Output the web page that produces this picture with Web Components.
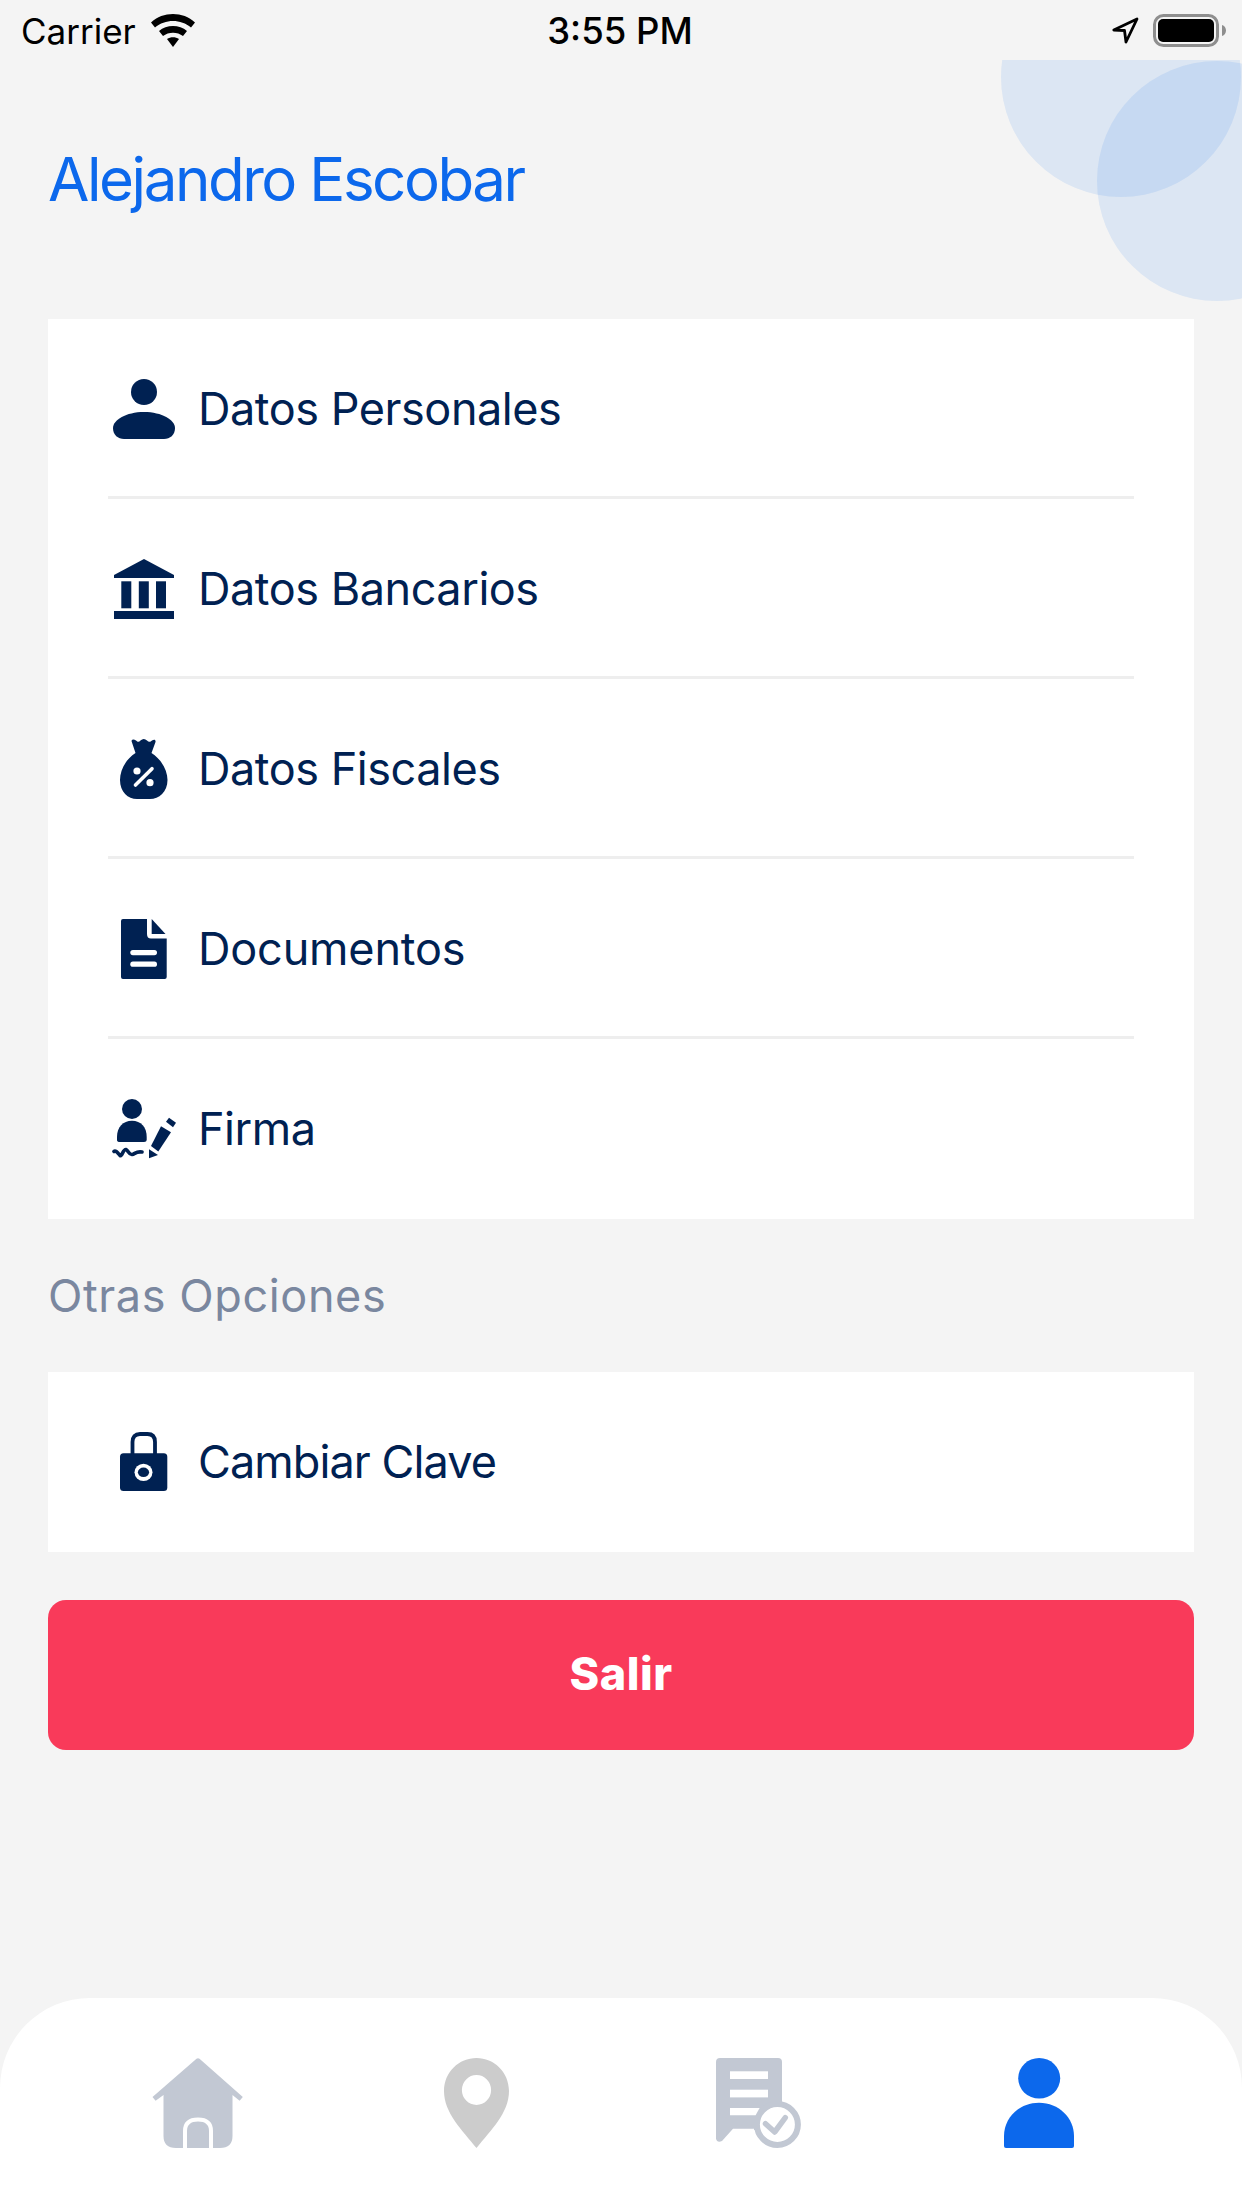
<!DOCTYPE html>
<html lang="es">
<head>
<meta charset="utf-8">
<title>Perfil</title>
<style>
  html, body { margin: 0; padding: 0; }
  body { background: #f4f4f4; font-family: Inter, "Liberation Sans", sans-serif; }
  app-screen { height: 2208px; }
</style>
</head>
<body>
<app-screen>
  <status-bar></status-bar>
  <profile-header name="Alejandro Escobar"></profile-header>
  <menu-card>
    <menu-row label="Datos Personales" icon="person"></menu-row>
    <menu-row label="Datos Bancarios" icon="bank"></menu-row>
    <menu-row label="Datos Fiscales" icon="bag"></menu-row>
    <menu-row label="Documentos" icon="doc" spacing="-.17px"></menu-row>
    <menu-row label="Firma" icon="sign" last></menu-row>
  </menu-card>
  <section-label>Otras Opciones</section-label>
  <menu-card>
    <menu-row label="Cambiar Clave" icon="lock" spacing="-.92px" last></menu-row>
  </menu-card>
  <logout-button>Salir</logout-button>
  <tab-bar></tab-bar>
</app-screen>

<script>
// iconos de las filas, caja de 64x60
const ROW_ICONS = {
  person: `<circle cx="32" cy="13" r="13"/><path d="M32 33C50 33 63 41 63 49C63 56 58 60 52 60H12C6 60 1 56 1 49C1 41 14 33 32 33Z"/>`,
  bank: `<path d="M32 0L62 16V19H2V16Z"/><rect x="9.3" y="22.3" width="10" height="27"/><rect x="26.8" y="22.3" width="10" height="27"/><rect x="44" y="22.3" width="10" height="27"/><rect x="2" y="52" width="60" height="8"/>`,
  bag: `<path d="M19.5 2C20 0 22 0 24 1.5C26 3.5 27 3 28.5 1.5C30.5 -.5 33 -.5 35 1.5C36.5 3 38 3.5 40 1.5C42 0 44 .5 43.5 3L39.5 14C49 20 55.5 31 55.5 41C55.5 53 47 60 38 60H25C16 60 8 53 8 41C8 31 14 20 23.5 14Z"/><circle cx="25" cy="32" r="3.6" fill="#fff"/><circle cx="38" cy="43.7" r="3.6" fill="#fff"/><path d="M23.5 46L40 29.7" stroke="#fff" stroke-width="3.6" stroke-linecap="round"/>`,
  doc: `<path d="M11 0H35V15Q35 19.5 39 19.5H54.7V58Q54.7 60 52.7 60H11Q9 60 9 58V2Q9 0 11 0Z"/><path d="M39.7 0L53.5 15H39.7Z"/><rect x="18.3" y="31" width="26.7" height="5.2" rx="2.6" fill="#fff"/><rect x="18.3" y="42.6" width="26.7" height="5.2" rx="2.6" fill="#fff"/>`,
  sign: `<circle cx="20" cy="10" r="10"/><path d="M5 38C5 28 11 21.7 20 21.7C29 21.7 34.7 28 34.7 38V41Q34.7 43 32 43H8Q5 43 5 41Z"/><path d="M2 52.5C4 51 6 54 8 56.5C10 58 11 50 14 50.5C16 51 17 56 20 55.5C23 55 24 52 30 53" fill="none" stroke="#002152" stroke-width="3.6" stroke-linecap="round"/><path d="M49 27.3L59 33.3L46.3 52.5L39 47Z"/><path d="M54 22.7L57 18.7L64 23.7L61 28.3Z"/><path d="M37 50.3L46 56L37 59.3Z"/>`,
  lock: `<path d="M20.5 22V10Q20.5 2 28 2H35.5Q43 2 43 10V22" fill="none" stroke="#002152" stroke-width="3.8"/><rect x="8" y="21.3" width="47.3" height="37.7" rx="3.5"/><ellipse cx="31.5" cy="40.3" rx="9" ry="8.6" fill="#fff"/><ellipse cx="31.5" cy="40.3" rx="5.6" ry="4.8"/>`
};

const statusTpl = document.createElement("template");
statusTpl.innerHTML = `
  <style>
    :host { display: flex; align-items: center; height: 60px; padding: 0 21px; box-sizing: border-box; color: #000; font: 400 35px Inter, "Liberation Sans", sans-serif; }
    .side { flex: 1; display: flex; align-items: center; }
    .left { gap: 15px; }
    .left span, .time { padding-top: 2px; }
    .right { justify-content: flex-end; gap: 14px; margin-right: -5px; }
    .time { font-weight: 500; font-size: 36.5px; margin-right: 7px; }
    svg { display: block; }
  </style>
  <div class="side left">
    <span>Carrier</span>
    <svg width="44" height="33" viewBox="0 0 44 33">
      <path d="M0 8.5C12 -2.8 32 -2.8 44 8.5L40 13.5C30 4.8 14 4.8 4 13.5Z"/>
      <path d="M8 17C15.5 10.4 28.5 10.4 36 17L32 22C26.5 17.5 17.5 17.5 12 22Z"/>
      <path d="M16 25C19.5 22.5 24.5 22.5 28 25L22 33Z"/>
    </svg>
  </div>
  <span class="time">3:55 PM</span>
  <div class="side right">
    <svg width="27" height="27" viewBox="0 0 27 27"><path d="M1.8 13L25 2L14 25L12.5 13.5Z" fill="none" stroke="#000" stroke-width="2.8" stroke-linejoin="round"/></svg>
    <svg width="73" height="33" viewBox="0 0 73 33">
      <rect x="1.5" y="1.5" width="63" height="30" rx="9" fill="none" stroke="#8e8e8e" stroke-width="3"/>
      <rect x="5" y="5" width="56" height="23" rx="5"/>
      <path d="M69 11C71.5 11.5 73 14 73 16.5C73 19 71.5 21.5 69 22Z" fill="#8e8e8e"/>
    </svg>
  </div>`;

class StatusBar extends HTMLElement {
  constructor() {
    super();
    this.attachShadow({ mode: "open" }).appendChild(statusTpl.content.cloneNode(true));
  }
}

class ProfileHeader extends HTMLElement {
  connectedCallback() {
    this.attachShadow({ mode: "open" }).innerHTML = `
      <style>
        :host { display: block; position: relative; height: 259px; overflow: hidden; }
        h1 { margin: 0; padding: 89px 0 0 48px; font: 400 60px/60px Inter, sans-serif; letter-spacing: -2.45px; color: #0c68ec; }
        .blob { position: absolute; width: 240px; height: 240px; border-radius: 50%; background: rgba(12, 104, 236, .1); }
        .a { left: 1001px; top: -103px; }
        .b { left: 1097px; top: 1px; }
      </style>
      <div class="blob a"></div>
      <div class="blob b"></div>
      <h1>${this.getAttribute("name")}</h1>`;
  }
}

class MenuCard extends HTMLElement {
  constructor() {
    super();
    this.attachShadow({ mode: "open" }).innerHTML = `
      <style>:host { display: block; margin: 0 48px; background: #fff; }</style>
      <slot></slot>`;
  }
}

class MenuRow extends HTMLElement {
  connectedCallback() {
    const line = this.hasAttribute("last") ? "" : `<div class="line"></div>`;
    const spacing = this.getAttribute("spacing") || "-.45px";
    this.attachShadow({ mode: "open" }).innerHTML = `
      <style>
        :host { display: block; position: relative; height: 180px; color: #002152; }
        .row { display: flex; align-items: center; gap: 22px; height: 180px; padding-left: 64px; font: 400 45px Inter, sans-serif; letter-spacing: ${spacing}; }
        .row span { padding-bottom: 1px; }
        svg { display: block; fill: #002152; flex: none; }
        .line { position: absolute; left: 60px; right: 60px; top: 177px; height: 3px; background: #eeeeee; }
      </style>
      <div class="row">
        <svg width="64" height="60" viewBox="0 0 64 60">${ROW_ICONS[this.getAttribute("icon")]}</svg>
        <span>${this.getAttribute("label")}</span>
      </div>
      ${line}`;
  }
}

class SectionLabel extends HTMLElement {
  constructor() {
    super();
    this.attachShadow({ mode: "open" }).innerHTML = `
      <style>
        :host { display: flex; align-items: center; height: 153px; padding-left: 48px; box-sizing: border-box; color: #7a879f; font: 400 45px Inter, sans-serif; letter-spacing: .6px; }
      </style>
      <slot></slot>`;
  }
}

class LogoutButton extends HTMLElement {
  constructor() {
    super();
    this.attachShadow({ mode: "open" }).innerHTML = `
      <style>
        :host { display: flex; align-items: center; justify-content: center; height: 150px; margin: 48px 48px 0; border-radius: 18px; background: #f93a5a; color: #fff; font: 800 45px Inter, sans-serif; letter-spacing: .5px; }
        span { padding-bottom: 3px; }
      </style>
      <span><slot></slot></span>`;
  }
}

class TabBar extends HTMLElement {
  constructor() {
    super();
    this.attachShadow({ mode: "open" }).innerHTML = `
      <style>
        :host { display: block; margin-top: auto; height: 210px; background: #fff; border-radius: 90px 90px 0 0; box-sizing: border-box; padding: 60px 0 0 58px; }
        nav { display: grid; grid-template-columns: repeat(4, 280px); justify-items: center; align-items: start; }
        svg { display: block; }
        .pin { margin-left: -3px; }
        .me { margin-left: 2px; }
      </style>
      <nav>
        <svg width="92" height="90" viewBox="0 0 92 90" fill="#c2c8d3">
          <path d="M44.5 .8Q46 -.4 47.5 .8L90.8 39L87.6 42.7L80.5 37V78Q80.5 90 68 90H24Q11.5 90 11.5 78V37L3.6 42.7L.5 39Z"/>
          <path d="M33 90V73Q33 61.5 46 61.5Q59 61.5 59 73V90" fill="none" stroke="#fff" stroke-width="4"/>
        </svg>
        <svg class="pin" width="65" height="90" viewBox="0 0 65 90" fill="#cccccc">
          <path fill-rule="evenodd" d="M32.5 0C50 0 65 14 65 33C65 55 47 72 32.5 90C18 72 0 55 0 33C0 14 15 0 32.5 0ZM32.5 17A14.6 15 0 1 0 32.5 47A14.6 15 0 1 0 32.5 17Z"/>
        </svg>
        <svg width="85" height="90" viewBox="0 0 85 90" fill="#c2c8d3">
          <path d="M4 0H62Q66 0 66 4V44H38.4V70.7H17L6 83Q1 85 0 80.7V4Q0 0 4 0Z"/>
          <path d="M38 44H66V60H38ZM38 60H50V72H38Z"/>
          <circle cx="61.4" cy="66.5" r="20.5" fill="#fff" stroke="#c2c8d3" stroke-width="6"/>
          <path d="M49.5 65.7L58.7 74L69.3 59.7" fill="none" stroke="#c2c8d3" stroke-width="5.5" stroke-linecap="round" stroke-linejoin="round"/>
          <rect x="14" y="13.3" width="38" height="7.7" fill="#fff"/>
          <rect x="14" y="31.7" width="38" height="7.7" fill="#fff"/>
          <path d="M14 50H43.6L39.6 57.3H14Z" fill="#fff"/>
        </svg>
        <svg class="me" width="70" height="90" viewBox="0 0 70 90" fill="#0c68ec">
          <ellipse cx="35.2" cy="20.3" rx="21" ry="20.3"/>
          <path d="M35 44.7C55 44.7 70 60 70 78V88Q70 90 68 90H2Q0 90 0 88V78C0 60 15 44.7 35 44.7Z"/>
        </svg>
      </nav>`;
  }
}

class AppScreen extends HTMLElement {
  constructor() {
    super();
    this.attachShadow({ mode: "open" }).innerHTML = `
      <style>:host { display: flex; flex-direction: column; }</style>
      <slot></slot>`;
  }
}

customElements.define("app-screen", AppScreen);
customElements.define("status-bar", StatusBar);
customElements.define("profile-header", ProfileHeader);
customElements.define("menu-card", MenuCard);
customElements.define("menu-row", MenuRow);
customElements.define("section-label", SectionLabel);
customElements.define("logout-button", LogoutButton);
customElements.define("tab-bar", TabBar);
</script>
</body>
</html>
